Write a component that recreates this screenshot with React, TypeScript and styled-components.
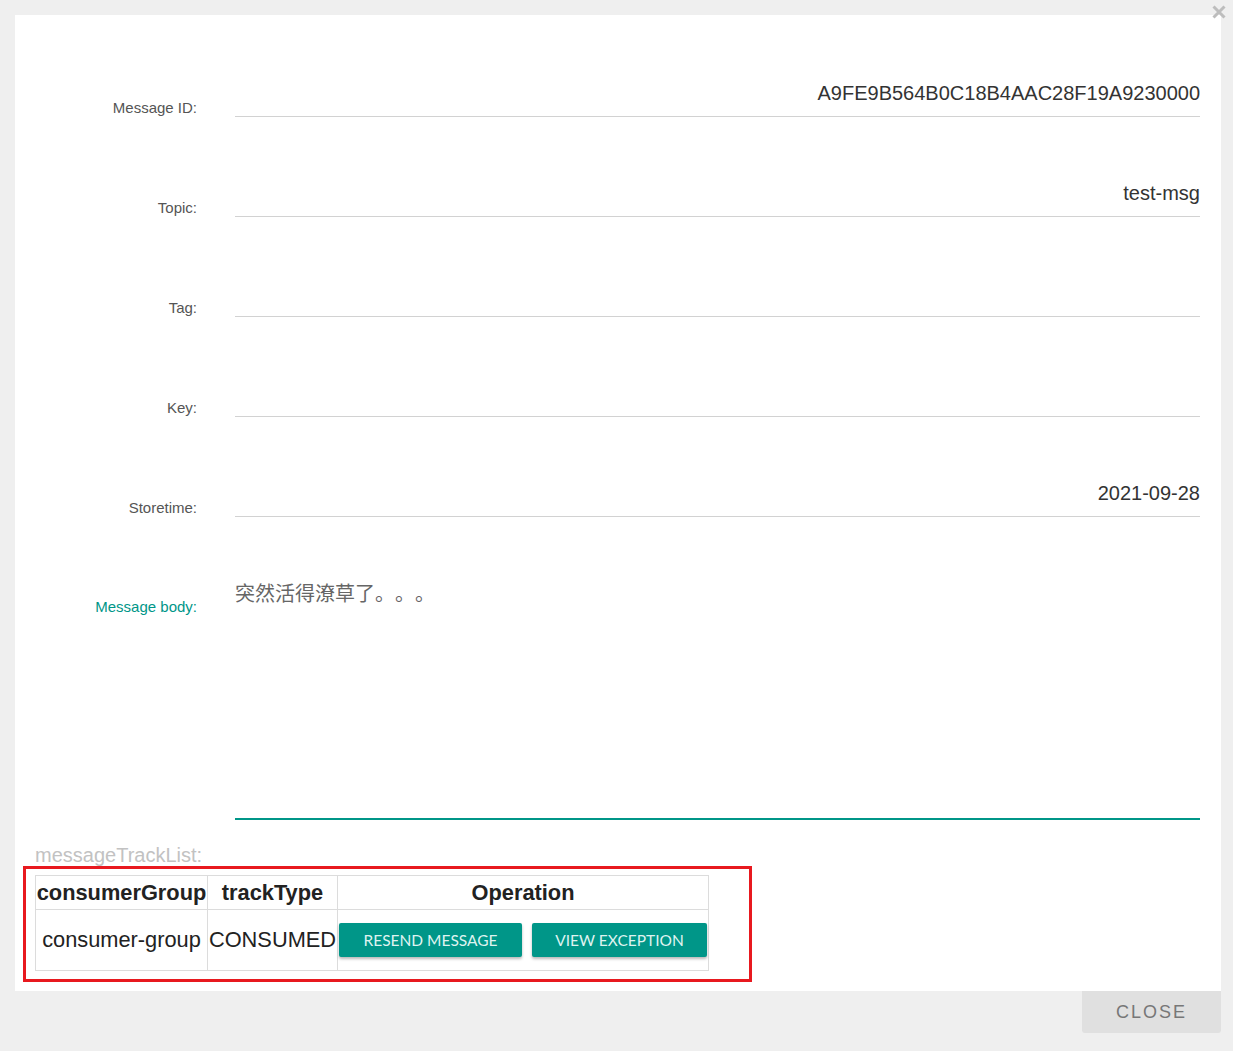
import React from "react";
import styled, { createGlobalStyle } from "styled-components";

const GlobalStyle = createGlobalStyle`
  html, body { margin: 0; padding: 0; background: #efefef; }
  body { font-family: "Liberation Sans", Arial, sans-serif; }
  * { box-sizing: border-box; }
`;

const Page = styled.div`
  position: relative;
  width: 1233px;
  height: 1051px;
  padding: 15px 12px 0 15px;
  display: flex;
  flex-direction: column;
  align-items: flex-end;
`;

const CloseX = styled.svg`
  position: absolute;
  top: 5px;
  right: 7px;
  width: 14px;
  height: 14px;
`;

const Panel = styled.div`
  width: 1206px;
  height: 976px;
  background: #ffffff;
  padding: 2px 21px 0 0;
  display: flex;
  flex-direction: column;
`;

const Row = styled.div`
  display: grid;
  grid-template-columns: 182px 1fr;
  column-gap: 38px;
  height: 100px;
  align-items: end;
`;

const Label = styled.div<{ $active?: boolean }>`
  text-align: right;
  font-size: 15px;
  line-height: 17px;
  color: ${(p) => (p.$active ? "#009688" : "#555")};
  padding-bottom: 1px;
`;

const Field = styled.div`
  height: 40px;
  border-bottom: 1px solid #d2d2d2;
  padding-bottom: 11px;
  display: flex;
  align-items: flex-end;
  justify-content: flex-end;
  font-size: 20px;
  line-height: 24px;
  color: #333;
`;

const BodyRow = styled.div`
  display: grid;
  grid-template-columns: 182px 1fr;
  column-gap: 38px;
  margin-top: 64px;
  align-items: start;
`;

const BodyLabel = styled(Label)`
  padding-top: 17px;
`;

const BodyArea = styled.div`
  height: 239px;
  border-bottom: 2px solid #009688;
  font-family: "Noto Sans CJK SC", "Liberation Sans", sans-serif;
  font-size: 20px;
  line-height: 23px;
  color: #666;
  text-spacing-trim: space-all;
  font-feature-settings: "halt" 0, "chws" 0;
`;

const TrackTitle = styled.div`
  margin: 23px 0 0 20px;
  font-size: 20px;
  line-height: 24px;
  color: #c2c2c2;
`;

const Highlight = styled.div`
  margin: -1px 0 0 8px;
  width: 729px;
  height: 116px;
  border: 3px solid #e8191f;
  padding: 6px 0 0 9px;
`;

const Table = styled.table`
  border-collapse: collapse;
  border: 1px solid #dcdcdc;
  color: #222;
`;

const Th = styled.th<{ $w: number }>`
  width: ${(p) => p.$w}px;
  height: 34px;
  padding: 0;
  border: 1px solid #dcdcdc;
  font-weight: bold;
  font-size: 21.8px;
  text-align: center;
  color: #222;
`;

const Td = styled.td`
  height: 61px;
  padding: 0;
  border: 1px solid #dcdcdc;
  text-align: center;
  font-size: 21.8px;
  white-space: nowrap;
`;

const OpCell = styled.td`
  height: 61px;
  padding: 0 0 0 1px;
  border: 1px solid #dcdcdc;
`;

const Buttons = styled.div`
  display: flex;
  gap: 10px;
`;

const TealButton = styled.button<{ $w: number }>`
  width: ${(p) => p.$w}px;
  height: 34px;
  border: none;
  border-radius: 2px;
  background: #009688;
  color: #dff3f0;
  font-family: Lato, "Liberation Sans", sans-serif;
  font-size: 15.5px;
  box-shadow: 0 2px 3px rgba(0, 0, 0, 0.28);
  padding: 0;
  cursor: pointer;
`;

const CloseButton = styled.button`
  width: 139px;
  height: 42px;
  border: none;
  border-radius: 0 0 3px 3px;
  background: #e0e0e0;
  color: #777;
  font-family: "Liberation Sans", Arial, sans-serif;
  font-size: 18px;
  letter-spacing: 2px;
  padding: 0;
`;

const fields = [
  { label: "Message ID:", value: "A9FE9B564B0C18B4AAC28F19A9230000" },
  { label: "Topic:", value: "test-msg" },
  { label: "Tag:", value: "" },
  { label: "Key:", value: "" },
  { label: "Storetime:", value: "2021-09-28" },
];

export default function App() {
  return (
    <>
      <GlobalStyle />
      <Page>
        <CloseX viewBox="0 0 14 14">
          <path d="M1.5 1.5 L12.5 12.5 M12.5 1.5 L1.5 12.5" stroke="#bdbdbd" strokeWidth="3" />
        </CloseX>
        <Panel>
          {fields.map((f) => (
            <Row key={f.label}>
              <Label>{f.label}</Label>
              <Field>{f.value}</Field>
            </Row>
          ))}
          <BodyRow>
            <BodyLabel $active>Message body:</BodyLabel>
            <BodyArea>突然活得潦草了。。。</BodyArea>
          </BodyRow>
          <TrackTitle>messageTrackList:</TrackTitle>
          <Highlight>
            <Table>
              <thead>
                <tr>
                  <Th $w={172}>consumerGroup</Th>
                  <Th $w={130}>trackType</Th>
                  <Th $w={371}>Operation</Th>
                </tr>
              </thead>
              <tbody>
                <tr>
                  <Td>consumer-group</Td>
                  <Td>CONSUMED</Td>
                  <OpCell>
                    <Buttons>
                      <TealButton $w={183}>RESEND MESSAGE</TealButton>
                      <TealButton $w={175}>VIEW EXCEPTION</TealButton>
                    </Buttons>
                  </OpCell>
                </tr>
              </tbody>
            </Table>
          </Highlight>
        </Panel>
        <CloseButton>CLOSE</CloseButton>
      </Page>
    </>
  );
}
